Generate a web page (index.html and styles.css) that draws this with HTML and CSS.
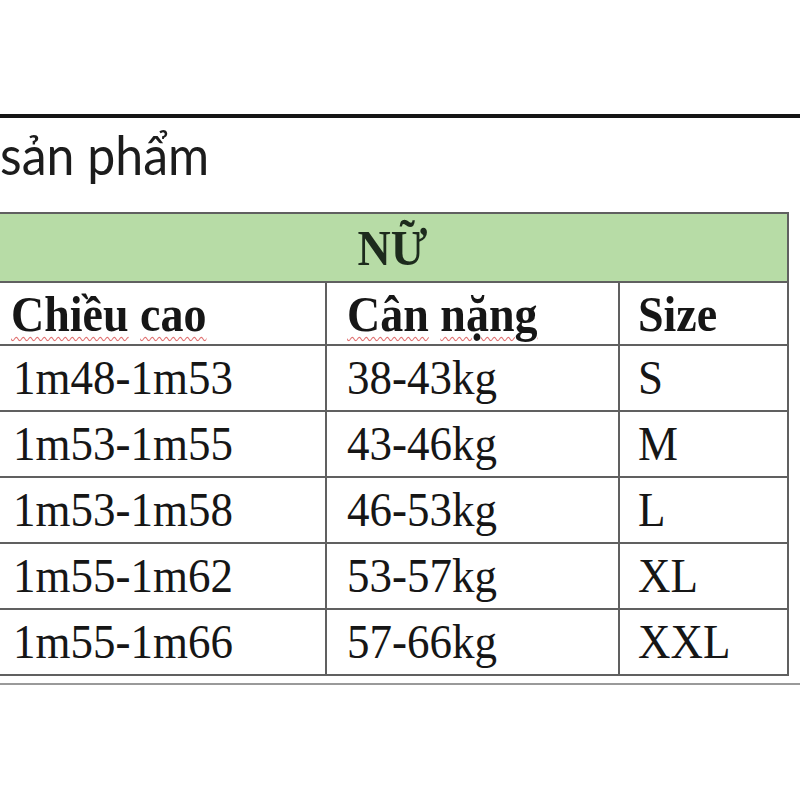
FILE: index.html
```html
<!DOCTYPE html>
<html lang="vi">
<head>
<meta charset="utf-8">
<title>Bảng size</title>
<link rel="stylesheet" href="styles.css">
</head>
<body>
<div class="page">
  <div class="topline"></div>
  <div class="title"><span class="sx">sản phẩm</span></div>
  <table class="size">
    <colgroup>
      <col class="c1"><col class="c2"><col class="c3">
    </colgroup>
    <tr class="green">
      <td colspan="3"><span class="sx">NỮ</span></td>
    </tr>
    <tr class="head">
      <td class="p1"><span class="sx"><span class="sp">Chiều</span> <span class="sp">cao</span></span></td>
      <td class="p2"><span class="sx"><span class="sp">Cân</span> <span class="sp">nặng</span></span></td>
      <td class="p3"><span class="sx">Size</span></td>
    </tr>
    <tr class="row">
      <td class="p1"><span class="sx">1m48-1m53</span></td>
      <td class="p2"><span class="sx">38-43kg</span></td>
      <td class="p3"><span class="sx">S</span></td>
    </tr>
    <tr class="row">
      <td class="p1"><span class="sx">1m53-1m55</span></td>
      <td class="p2"><span class="sx">43-46kg</span></td>
      <td class="p3"><span class="sx">M</span></td>
    </tr>
    <tr class="row">
      <td class="p1"><span class="sx">1m53-1m58</span></td>
      <td class="p2"><span class="sx">46-53kg</span></td>
      <td class="p3"><span class="sx">L</span></td>
    </tr>
    <tr class="row">
      <td class="p1"><span class="sx">1m55-1m62</span></td>
      <td class="p2"><span class="sx">53-57kg</span></td>
      <td class="p3"><span class="sx">XL</span></td>
    </tr>
    <tr class="row">
      <td class="p1"><span class="sx">1m55-1m66</span></td>
      <td class="p2"><span class="sx">57-66kg</span></td>
      <td class="p3"><span class="sx">XXL</span></td>
    </tr>
  </table>
  <div class="bottomline"></div>
</div>
</body>
</html>
```
FILE: styles.css
```css
html, body {
  margin: 0;
  padding: 0;
  background: #ffffff;
}
.page {
  width: 800px;
  height: 800px;
  overflow: hidden;
  padding-top: 114px;
  box-sizing: border-box;
}
.topline {
  height: 4px;
  background: #151515;
}
.sx {
  display: inline-block;
  transform: scaleY(1.1);
  transform-origin: 50% 50%;
}
.title {
  margin-top: 6px;
  height: 60px;
  line-height: 60px;
  font-family: Lato, "Open Sans", sans-serif;
  font-size: 50px;
  color: #1c1c1c;
}
.title .sx {
  line-height: 60px;
}
.size {
  margin-top: 28px;
  margin-left: -12px;
  border-collapse: collapse;
  table-layout: fixed;
  width: 799px;
  font-family: "Liberation Serif", "Times New Roman", serif;
  color: #161616;
}
.c1 { width: 337px; }
.c2 { width: 293px; }
.c3 { width: 169px; }
.size td {
  border: 2px solid #606060;
  padding: 0;
  vertical-align: middle;
  font-size: 45px;
  line-height: 45px;
  white-space: nowrap;
}
.size td .sx {
  line-height: 45px;
}
.green td {
  height: 67px;
  background: #b7dca6;
  text-align: center;
  font-weight: bold;
  font-size: 46px;
  color: #1d2b1d;
  padding-left: 8px;
}
.head td {
  height: 61px;
  font-weight: bold;
  font-size: 46px;
}
.row td {
  height: 64px;
}
.p1 { padding-left: 23px !important; }
.p2 { padding-left: 20px !important; }
.p3 { padding-left: 18px !important; }
.head .p1 { padding-left: 21px !important; }
.sp {
  text-decoration-line: underline;
  text-decoration-style: wavy;
  text-decoration-color: #e07070;
  text-decoration-thickness: 1px;
  text-underline-offset: 5px;
}
.bottomline {
  margin-top: 7px;
  height: 2px;
  background: #9a9a9a;
}
```
